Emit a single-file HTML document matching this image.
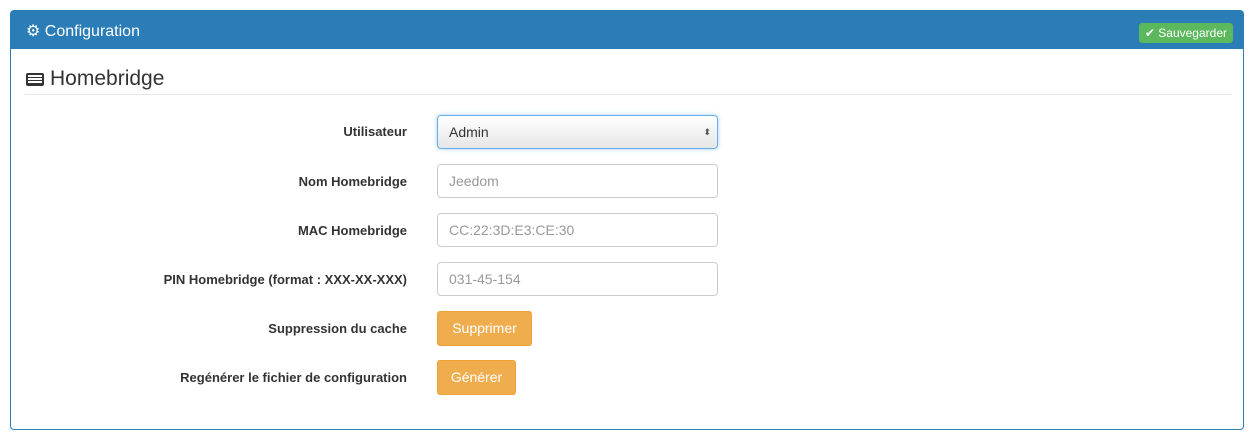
<!DOCTYPE html>
<html><head><meta charset="utf-8"><style>
body{margin:0;background:#fff;font-family:"Liberation Sans",sans-serif;width:1255px;height:439px;position:relative;overflow:hidden}
.panel{position:absolute;left:10px;top:10px;width:1232px;height:418px;border:1px solid #2a7db6;border-radius:4px}
.hdr{position:absolute;left:0;top:0;right:0;height:38px;background:#2a7db6;color:#fff;font-size:16px}
.hdr .t{position:absolute;left:15px;top:10px}
.save{position:absolute;right:10px;top:12px;background:#5cb85c;color:#fff;font-size:12px;padding:3px 6px;border-radius:3px}
h3{position:absolute;left:15px;top:56px;margin:0;font-weight:normal;font-size:21px;color:#333}
.hr{position:absolute;left:14px;right:11px;top:83px;border-top:1px solid #e5e5e5}
.lbl{position:absolute;right:836px;font-weight:bold;font-size:13px;color:#333;text-align:right;white-space:nowrap}
.in{position:absolute;left:426px;width:268px;height:32px;border:1px solid #ccc;border-radius:4px;font-size:14px;color:#999;line-height:32px;padding-left:11px}
.sel{background:linear-gradient(#fff,#e6e6e6);border-color:#66afe9;color:#333;box-shadow:0 0 4px rgba(102,175,233,.6)}
.btn{position:absolute;left:426px;height:33px;line-height:33px;background:#f0ad4e;border:1px solid #eea236;color:#fff;font-size:14px;border-radius:3px;text-align:center}
</style></head><body>
<div class="panel">
<div class="hdr"><span class="t">⚙ Configuration</span><span class="save">✔ Sauvegarder</span></div>
<h3><span style="display:inline-block;width:18px;height:13px;border:2px solid #333;border-radius:2px;box-sizing:border-box;margin-right:6px;vertical-align:-1px;background:repeating-linear-gradient(#fff 0 2px,#333 2px 3px)"></span>Homebridge</h3>
<div class="hr"></div>
<div class="lbl" style="top:113px">Utilisateur</div>
<div class="in sel" style="top:104px">Admin<span style="position:absolute;right:6px;font-size:9px;color:#555">⬍</span></div>
<div class="lbl" style="top:163px">Nom Homebridge</div>
<div class="in" style="top:153px">Jeedom</div>
<div class="lbl" style="top:212px">MAC Homebridge</div>
<div class="in" style="top:202px">CC:22:3D:E3:CE:30</div>
<div class="lbl" style="top:261px">PIN Homebridge (format : XXX-XX-XXX)</div>
<div class="in" style="top:251px">031-45-154</div>
<div class="lbl" style="top:310px">Suppression du cache</div>
<div class="btn" style="top:300px;width:93px">Supprimer</div>
<div class="lbl" style="top:359px">Regénérer le fichier de configuration</div>
<div class="btn" style="top:349px;width:77px">Générer</div>
</div>
</body></html>
